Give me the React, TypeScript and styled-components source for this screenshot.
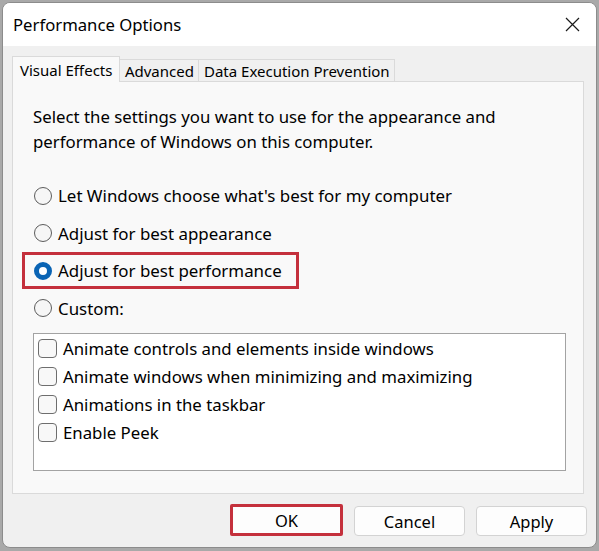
import React from "react";
import styled, { createGlobalStyle } from "styled-components";

const Global = createGlobalStyle`
  html, body {
    margin: 0;
    padding: 0;
    background: #a9a9a9;
  }
  body {
    font-family: "Noto Sans", "Open Sans", sans-serif;
    color: #000;
  }
  * { box-sizing: border-box; }
`;

const Page = styled.div`
  padding: 2px 2px 0 2px;
`;

const Window = styled.div`
  width: 595px;
  height: 546px;
  border: 1px solid #8c8c8c;
  border-radius: 8px;
  overflow: hidden;
  background: #f0f0f0;
  display: flex;
  flex-direction: column;
`;

const TitleBar = styled.div`
  height: 43px;
  background: #fff;
  display: flex;
  align-items: center;
  justify-content: space-between;
  padding: 0 16px 0 10px;
`;

const Title = styled.span`
  font-size: 16.7px;
`;

const CloseButton = styled.button`
  border: none;
  background: none;
  padding: 0;
  width: 16px;
  height: 16px;
  display: flex;
  align-items: center;
  justify-content: center;
`;

const Body = styled.div`
  flex: 1;
  display: flex;
  flex-direction: column;
  padding: 10px 12px 0 9px;
`;

const TabStrip = styled.div`
  display: flex;
  align-items: flex-end;
  height: 25px;
  position: relative;
  z-index: 1;
`;

const Tab = styled.div<{ $active?: boolean }>`
  font-size: 15px;
  display: flex;
  align-items: center;
  border: 1px solid #dadada;
  border-bottom: none;
  background: ${(p) => (p.$active ? "#f9f9f9" : "#f0f0f0")};
  height: ${(p) => (p.$active ? "26px" : "22px")};
  margin-bottom: ${(p) => (p.$active ? "-1px" : "0")};
  padding: 0 ${(p) => (p.$active ? "7px" : "4.5px")};
  & + & {
    border-left: none;
  }
`;

const Panel = styled.div`
  height: 413px;
  background: #f9f9f9;
  border: 1px solid #dadada;
  padding: 22px 20px 0 20px;
  display: flex;
  flex-direction: column;
`;

const Intro = styled.p`
  margin: 0;
  font-size: 16.8px;
  line-height: 25px;
`;

const RadioList = styled.div`
  margin: 23px 0 0 -11px;
  display: flex;
  flex-direction: column;
  gap: 0.5px;
`;

const RadioRow = styled.label<{ $marked?: boolean }>`
  height: 37px;
  width: fit-content;
  display: flex;
  align-items: center;
  gap: 6px;
  padding: 0 14px 0 9px;
  border: 3px solid ${(p) => (p.$marked ? "#c4303c" : "transparent")};
  font-size: 16.9px;
`;

const RadioDot = styled.span<{ $checked?: boolean }>`
  width: 18px;
  height: 18px;
  border-radius: 50%;
  flex: none;
  background: ${(p) => (p.$checked ? "#fff" : "#f6f6f6")};
  border: ${(p) => (p.$checked ? "5px solid #0a64b4" : "1px solid #5c5c5c")};
`;

const ListBox = styled.div`
  margin-top: 6px;
  width: 533px;
  height: 138px;
  background: #fff;
  border: 1px solid #a3a3a3;
  padding: 1px 0 0 4px;
`;

const CheckRow = styled.label`
  height: 28px;
  display: flex;
  align-items: center;
  gap: 6px;
  font-size: 16.8px;
`;

const CheckBox = styled.span`
  width: 19px;
  height: 19px;
  flex: none;
  border: 1px solid #6e6e6e;
  border-radius: 4px;
  background: #f8f8f8;
`;

const Footer = styled.div`
  flex: 1;
  display: flex;
  justify-content: flex-end;
  align-items: flex-end;
  gap: 11px;
  padding: 0 0 11px 0;
  margin-right: -3px;
`;

const Button = styled.button<{ $marked?: boolean }>`
  font-family: inherit;
  font-size: 16.5px;
  color: #000;
  background: #fdfdfd;
  width: ${(p) => (p.$marked ? "113px" : "111px")};
  height: ${(p) => (p.$marked ? "32px" : "30px")};
  border: ${(p) => (p.$marked ? "3px solid #c4303c" : "1px solid #d3d3d3")};
  border-radius: ${(p) => (p.$marked ? "2px" : "4px")};
  padding: 0;
`;

const radios = [
  "Let Windows choose what's best for my computer",
  "Adjust for best appearance",
  "Adjust for best performance",
  "Custom:",
];

const effects = [
  "Animate controls and elements inside windows",
  "Animate windows when minimizing and maximizing",
  "Animations in the taskbar",
  "Enable Peek",
];

export default function App() {
  return (
    <Page>
      <Global />
      <Window>
        <TitleBar>
          <Title>Performance Options</Title>
          <CloseButton aria-label="Close">
            <svg width="15" height="15" viewBox="0 0 15 15">
              <path d="M1 1 L14 14 M14 1 L1 14" stroke="#1a1a1a" strokeWidth="1.2" />
            </svg>
          </CloseButton>
        </TitleBar>
        <Body>
          <TabStrip>
            <Tab $active>Visual Effects</Tab>
            <Tab>Advanced</Tab>
            <Tab>Data Execution Prevention</Tab>
          </TabStrip>
          <Panel>
            <Intro>
              Select the settings you want to use for the appearance and
              <br />
              performance of Windows on this computer.
            </Intro>
            <RadioList>
              {radios.map((r, i) => (
                <RadioRow key={r} $marked={i === 2}>
                  <RadioDot $checked={i === 2} />
                  {r}
                </RadioRow>
              ))}
            </RadioList>
            <ListBox>
              {effects.map((e) => (
                <CheckRow key={e}>
                  <CheckBox />
                  {e}
                </CheckRow>
              ))}
            </ListBox>
          </Panel>
          <Footer>
            <Button $marked>OK</Button>
            <Button>Cancel</Button>
            <Button>Apply</Button>
          </Footer>
        </Body>
      </Window>
    </Page>
  );
}
